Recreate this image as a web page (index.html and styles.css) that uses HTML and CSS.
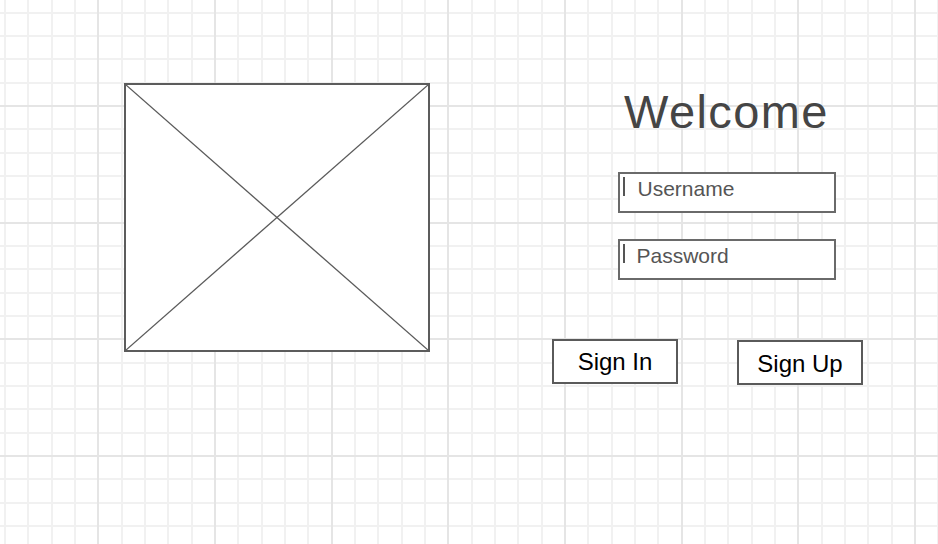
FILE: index.html
```html
<!DOCTYPE html>
<html lang="en">
<head>
<meta charset="utf-8">
<title>Welcome</title>
<link rel="stylesheet" href="styles.css">
</head>
<body>
<main class="page">
  <div class="placeholder">
    <svg class="placeholder-x" viewBox="0 0 100 100" preserveAspectRatio="none">
      <line x1="0" y1="0" x2="100" y2="100" vector-effect="non-scaling-stroke"/>
      <line x1="100" y1="0" x2="0" y2="100" vector-effect="non-scaling-stroke"/>
    </svg>
  </div>
  <section class="login">
    <h1 class="title">Welcome</h1>
    <div class="field field-user"><span class="caret"></span><span class="ph">Username</span></div>
    <div class="field field-pass"><span class="caret"></span><span class="ph ph-pass">Password</span></div>
    <div class="actions">
      <div class="btn btn-in">Sign In</div>
      <div class="btn btn-up">Sign Up</div>
    </div>
  </section>
</main>
</body>
</html>
```
FILE: styles.css
```css
html, body {
  margin: 0;
  padding: 0;
}
body {
  min-height: 544px;
  background-color: #ffffff;
  background-image:
    repeating-linear-gradient(to right, transparent 0 97.3px, #e5e5e5 97.3px 99.3px, transparent 99.3px 116.65px),
    repeating-linear-gradient(to bottom, transparent 0 105px, #e5e5e5 105px 107px, transparent 107px 116.65px),
    repeating-linear-gradient(to right, transparent 0 4px, #f1f1f1 4px 6px, transparent 6px 23.33px),
    repeating-linear-gradient(to bottom, transparent 0 11.7px, #f1f1f1 11.7px 13.7px, transparent 13.7px 23.33px);
  background-size: 100% 100%;
  background-repeat: no-repeat;
  font-family: "Liberation Sans", Arial, sans-serif;
  overflow: hidden;
}
.page {
  display: flex;
  align-items: flex-start;
  padding: 83px 0 0 124px;
}
.placeholder {
  box-sizing: border-box;
  width: 306px;
  height: 269px;
  border: 2px solid #5c5c5c;
  background: #ffffff;
  flex: none;
}
.placeholder-x {
  display: block;
  width: 100%;
  height: 100%;
}
.placeholder-x line {
  stroke: #5a5a5a;
  stroke-width: 1.3;
}
.login {
  margin-left: 122px;
  width: 312px;
  display: flex;
  flex-direction: column;
}
.title {
  margin: 4.5px 0 0 72px;
  font-weight: normal;
  font-size: 47px;
  line-height: 47px;
  letter-spacing: 1.4px;
  color: #454545;
}
.field {
  box-sizing: border-box;
  margin-left: 66px;
  width: 218px;
  height: 41px;
  border: 2px solid #6a6a6a;
  background: #ffffff;
  padding: 3px 0 0 2.5px;
  font-size: 21px;
  line-height: 24px;
  color: #555555;
  white-space: nowrap;
}
.field-user {
  margin-top: 37.5px;
}
.field-pass {
  margin-top: 26px;
}
.caret {
  display: inline-block;
  width: 2px;
  height: 19px;
  background: #555555;
  margin-right: 13px;
  vertical-align: baseline;
}
.ph-pass {
  margin-left: -1px;
}
.actions {
  display: flex;
  align-items: flex-start;
  gap: 59px;
  margin-top: 59px;
}
.btn {
  box-sizing: border-box;
  width: 126px;
  height: 45px;
  border: 2px solid #5a5a5a;
  background: #ffffff;
  display: flex;
  align-items: center;
  justify-content: center;
  font-size: 24px;
  color: #000000;
}
.btn-up {
  margin-top: 1px;
  padding-top: 2px;
}
```
